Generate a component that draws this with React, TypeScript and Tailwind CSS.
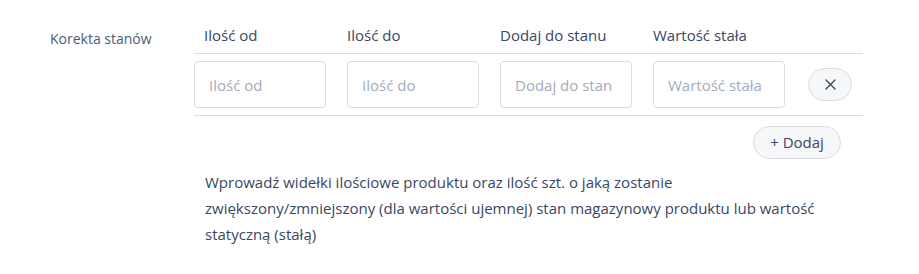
import React from 'react';

const cols = ['Ilość od', 'Ilość do', 'Dodaj do stanu', 'Wartość stała'];
const placeholders = ['Ilość od', 'Ilość do', 'Dodaj do stan', 'Wartość stała'];

export default function App() {
  return (
    <div className="w-[919px] h-[274px] bg-white font-['Open_Sans',sans-serif] flex pt-[25px]">
      {/* Label */}
      <div className="w-[194px] pl-[50px] text-[14px] leading-[28px] text-[#4b5d77]">Korekta stanów</div>

      <div className="w-[669px] flex flex-col">
        {/* Header */}
        <div className="flex h-[29px] border-b border-[#d9dce3]">
          <div className="w-[153px] pl-[10px] text-[15px] leading-[20px] text-[#3a4763]">{cols[0]}</div>
          {cols.slice(1).map((c) => (
            <div key={c} className="w-[153px] text-[15px] leading-[20px] text-[#3a4763]">{c}</div>
          ))}
        </div>

        {/* Row */}
        <div className="flex items-center h-[62px] border-b border-[#d9dce3]">
          {placeholders.map((p) => (
            <div key={p} className="w-[153px]">
              <input
                placeholder={p}
                className="w-[132px] h-[47px] px-[14px] rounded-[4px] border border-[#d9dce3] text-[15px] text-[#3a4763] placeholder:text-[#a3abbb] outline-none"
              />
            </div>
          ))}
          <button className="ml-[2px] w-[44px] h-[33px] rounded-full border border-[#d9dce3] bg-[#f6f7f9] flex items-center justify-center">
            <svg width="11" height="11" viewBox="0 0 11 11" fill="none" stroke="#3a4660" strokeWidth="1.4" strokeLinecap="round">
              <path d="M1 1L10 10M10 1L1 10" />
            </svg>
          </button>
        </div>

        {/* Add button */}
        <div className="flex justify-end pr-[22px] pt-[10px]">
          <button className="h-[33px] w-[88px] rounded-full border border-[#d9dce3] bg-[#f6f7f9] text-[15px] text-[#3a4763] flex items-center justify-center">+ Dodaj</button>
        </div>

        {/* Description */}
        <p className="pl-[11px] pt-[10px] w-[640px] text-[15px] leading-[26px] text-[#3a4763]">
          Wprowadź widełki ilościowe produktu oraz ilość szt. o jaką zostanie zwiększony/zmniejszony (dla wartości ujemnej) stan magazynowy produktu lub wartość statyczną (stałą)
        </p>
      </div>
    </div>
  );
}
